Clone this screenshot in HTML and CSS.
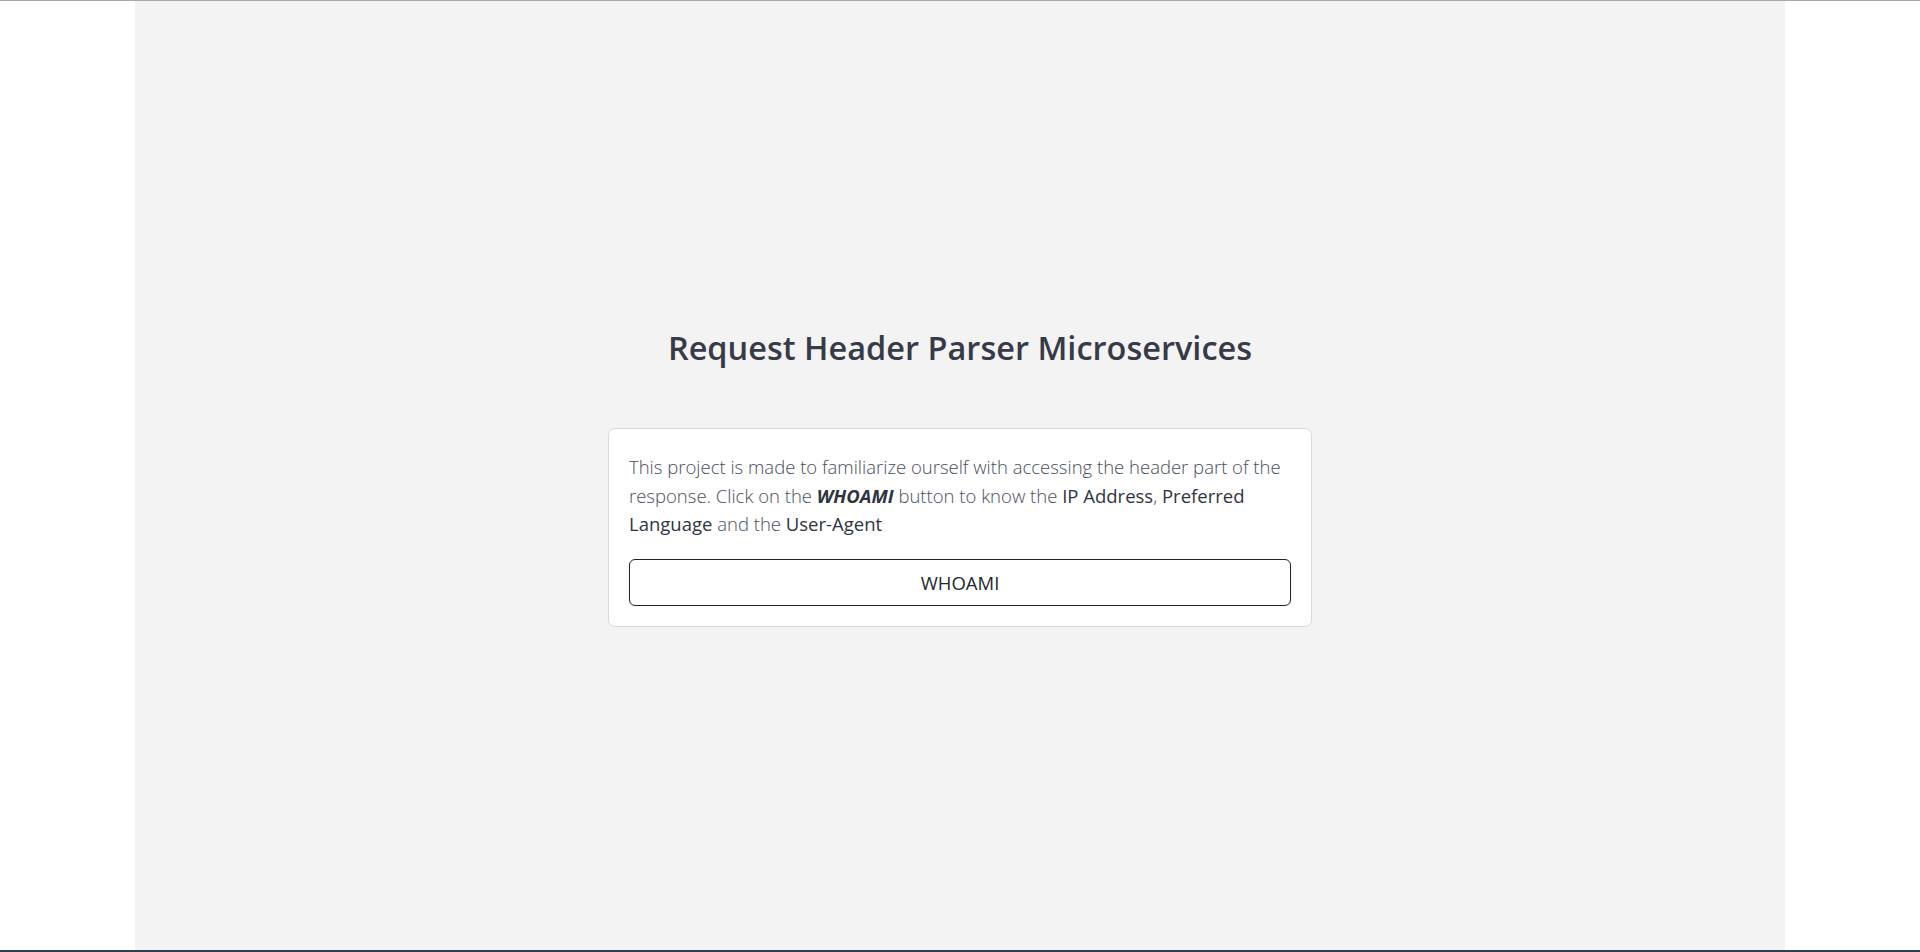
FILE: index.html
```html
<!DOCTYPE html>
<html lang="en">
<head>
<meta charset="utf-8">
<title>Request Header Parser Microservices</title>
<link rel="stylesheet" href="styles.css">
</head>
<body>
<div class="page">
  <main class="container">
    <h1 class="title">Request Header Parser Microservices</h1>
    <section class="card">
      <p class="intro">This project is made to familiarize ourself with accessing the header part of the response. Click on the <strong class="whoami">WHOAMI</strong> button to know the <span class="em">IP Address</span>, <span class="em">Preferred Language</span> and the <span class="em">User-Agent</span></p>
      <button class="btn" type="button">WHOAMI</button>
    </section>
  </main>
</div>
</body>
</html>
```

FILE: styles.css
```css
html, body {
  margin: 0;
  padding: 0;
}
body {
  background: #ffffff;
  font-family: "Open Sans", "Noto Sans", sans-serif;
}
.page {
  height: 100vh;
  box-sizing: border-box;
  border-top: 1px solid #a9a9ab;
  border-bottom: 2px solid #2c3e50;
  display: flex;
}
.container {
  flex: 1;
  margin: 0 135px;
  padding-top: 4px;
  background: #f3f3f3;
  display: flex;
  flex-direction: column;
  align-items: center;
  justify-content: center;
}
.title {
  margin: 0 0 61px;
  font-size: 32.5px;
  line-height: 1.2;
  font-weight: 600;
  color: #363b47;
}
.card {
  width: 704px;
  box-sizing: border-box;
  background: #ffffff;
  border: 1px solid #d9d9d9;
  border-radius: 7px;
  padding: 24px 20px 20px;
}
.intro {
  margin: 0 0 20px;
  font-size: 18.5px;
  line-height: 28.8px;
  font-weight: 300;
  color: #484e59;
}
.em {
  font-weight: 400;
  color: #2f3540;
}
.whoami {
  font-weight: 700;
  font-style: italic;
  color: #2f3540;
}
.btn {
  display: block;
  width: 100%;
  box-sizing: border-box;
  height: 47px;
  background: #ffffff;
  border: 1px solid #222;
  border-radius: 6px;
  font-family: "Open Sans", "Noto Sans", sans-serif;
  font-size: 18.5px;
  color: #222831;
  cursor: pointer;
}
```
